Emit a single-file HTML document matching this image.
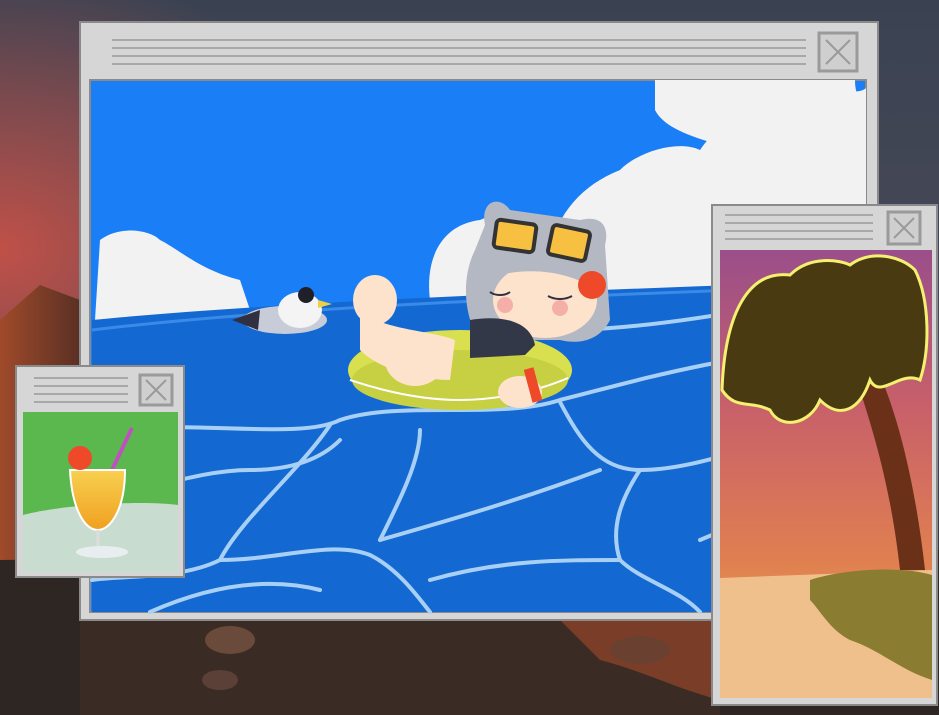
<!DOCTYPE html>
<html><head><style>html,body{margin:0;padding:0;width:939px;height:715px;overflow:hidden;background:#2c3038}</style></head><body>
<svg width="939" height="715" viewBox="0 0 939 715" xmlns="http://www.w3.org/2000/svg">
<defs>
<linearGradient id="sky" x1="0" y1="0" x2="0" y2="1"><stop offset="0" stop-color="#3a4252"/><stop offset="0.5" stop-color="#4a4a58"/><stop offset="1" stop-color="#2a2a30"/></linearGradient>
<radialGradient id="glow" cx="0" cy="0.35" r="0.4"><stop offset="0" stop-color="#c05048"/><stop offset="1" stop-color="#c05048" stop-opacity="0"/></radialGradient>
<linearGradient id="sunset" x1="0" y1="0" x2="0" y2="1"><stop offset="0" stop-color="#9a4e8a"/><stop offset="0.35" stop-color="#c8606a"/><stop offset="0.7" stop-color="#e08050"/><stop offset="1" stop-color="#f0b060"/></linearGradient>
<linearGradient id="drink" x1="0" y1="0" x2="0" y2="1"><stop offset="0" stop-color="#f8d050"/><stop offset="1" stop-color="#f0a020"/></linearGradient>
<linearGradient id="mtn" x1="0" y1="0" x2="1" y2="0"><stop offset="0" stop-color="#a04a2a"/><stop offset="1" stop-color="#5a3024"/></linearGradient>
</defs>
<rect width="939" height="715" fill="url(#sky)"/>
<rect width="939" height="715" fill="url(#glow)"/>
<path d="M0 320 L40 285 L80 300 L80 715 L0 715Z" fill="url(#mtn)"/>
<path d="M0 560 L939 550 L939 715 L0 715Z" fill="#2e2622"/>
<path d="M80 620 L720 620 L720 715 L80 715Z" fill="#3a2c24"/>
<path d="M560 620 L720 620 L720 700 C680 690 640 670 600 660Z" fill="#7a3e28"/>
<ellipse cx="230" cy="640" rx="25" ry="14" fill="#6a4a3a"/><ellipse cx="220" cy="680" rx="18" ry="10" fill="#5a4036"/><ellipse cx="640" cy="650" rx="30" ry="14" fill="#6a4030"/>
<rect x="80" y="22" width="798" height="598" fill="#d6d6d6" stroke="#8a8a8a" stroke-width="2"/>
<g stroke="#a8a8a8" stroke-width="2"><line x1="112" y1="40" x2="806" y2="40"/><line x1="112" y1="48" x2="806" y2="48"/><line x1="112" y1="56" x2="806" y2="56"/><line x1="112" y1="64" x2="806" y2="64"/></g>
<rect x="819" y="33" width="38" height="38" fill="#cfcfcf" stroke="#9a9a9a" stroke-width="3"/>
<path d="M826 40 L850 64 M850 40 L826 64" stroke="#9a9a9a" stroke-width="2"/>
<rect x="90" y="80" width="776" height="532" fill="#1a7ef6" stroke="#8a8a8a" stroke-width="2"/>
<path d="M540 300 C545 230 570 190 620 170 C640 150 680 140 700 150 C720 120 760 100 800 95 C830 90 860 95 866 88 L866 300Z" fill="#f2f2f2"/>
<path d="M655 80 L855 80 C855 95 860 100 866 105 L866 200 C820 190 780 160 740 150 C700 140 665 130 655 110Z" fill="#f2f2f2"/>
<path d="M430 300 C425 260 440 225 480 220 C500 210 530 220 545 240 L545 300Z" fill="#f2f2f2"/>
<path d="M95 320 L100 240 C120 225 150 230 160 240 C180 250 200 270 240 280 L250 310Z" fill="#f2f2f2"/>
<path d="M92 320 C300 300 600 290 866 280 L866 612 L92 612Z" fill="#1468d2"/>
<path d="M92 330 C300 305 600 295 866 285" stroke="#3a8ae8" stroke-width="3" fill="none"/>
<g stroke="#a8d0f4" stroke-width="4" fill="none" stroke-linecap="round">
<path d="M92 430 C200 420 300 440 340 420 C400 400 500 420 560 400 C640 380 700 360 866 340"/>
<path d="M330 425 C300 470 240 520 220 560 C180 580 120 575 92 580"/>
<path d="M220 560 C280 560 330 540 370 555 C400 570 420 600 430 612"/>
<path d="M420 430 C420 460 400 500 380 540"/>
<path d="M560 402 C580 440 600 470 640 470 C700 470 760 440 866 420"/>
<path d="M640 470 C620 500 610 530 620 560 C640 580 680 590 700 612"/>
<path d="M380 540 C450 520 520 500 600 470"/>
<path d="M430 580 C500 560 560 560 620 560"/>
<path d="M92 500 C150 490 200 470 250 470 C290 470 320 460 340 440"/>
<path d="M866 470 C800 490 750 520 700 540"/>
<path d="M150 612 C200 590 260 575 320 590"/>
<path d="M560 330 C620 330 700 320 800 300"/>
</g>
<ellipse cx="285" cy="320" rx="42" ry="14" fill="#c8ccd8"/>
<ellipse cx="300" cy="310" rx="22" ry="18" fill="#f4f4f4"/>
<path d="M232 320 L260 310 L258 330Z" fill="#303040"/>
<circle cx="306" cy="295" r="8" fill="#202028"/>
<path d="M318 300 L332 304 L318 308Z" fill="#f0d040"/>
<ellipse cx="460" cy="370" rx="112" ry="40" fill="#d8e050"/>
<ellipse cx="460" cy="380" rx="108" ry="30" fill="#c6d042"/>
<path d="M350 380 C380 390 420 400 460 400 C500 400 540 390 568 378" stroke="#fff" stroke-width="2" fill="none"/>
<path d="M485 225 C480 200 500 195 510 210 L580 220 C600 215 610 225 605 245 L610 320 C600 340 580 345 560 340 L480 340 C465 320 460 280 475 250Z" fill="#b4b8c2"/>
<ellipse cx="545" cy="300" rx="52" ry="38" fill="#fde2cc"/>
<path d="M480 260 C500 240 560 240 600 265 L595 290 C570 270 520 265 485 280Z" fill="#b4b8c2"/>
<circle cx="505" cy="305" r="8" fill="#f4b0a8"/><circle cx="560" cy="308" r="8" fill="#f4b0a8"/>
<path d="M490 292 C495 296 505 296 510 292 M548 296 C555 300 565 300 572 296" stroke="#303040" stroke-width="2" fill="none"/>
<rect x="495" y="222" width="40" height="28" rx="4" fill="#f8c040" stroke="#333" stroke-width="4" transform="rotate(8 515 236)"/>
<rect x="550" y="228" width="38" height="30" rx="4" fill="#f8c040" stroke="#333" stroke-width="4" transform="rotate(12 569 243)"/>
<circle cx="592" cy="285" r="14" fill="#ee4a2a"/>
<path d="M470 320 C500 315 530 320 535 345 L525 355 L470 358Z" fill="#333848"/>
<ellipse cx="375" cy="300" rx="22" ry="25" fill="#fde2cc"/>
<path d="M360 310 C380 330 430 330 455 340 L450 380 C420 380 380 370 360 350Z" fill="#fde2cc"/>
<ellipse cx="415" cy="360" rx="30" ry="26" fill="#fde2cc"/>
<ellipse cx="520" cy="392" rx="22" ry="16" fill="#fde2cc"/>
<rect x="528" y="368" width="10" height="34" fill="#ee4a2a" transform="rotate(-15 533 385)"/>
<rect x="16" y="366" width="168" height="211" fill="#d6d6d6" stroke="#8a8a8a" stroke-width="2"/>
<g stroke="#a8a8a8" stroke-width="2"><line x1="34" y1="378" x2="128" y2="378"/><line x1="34" y1="386" x2="128" y2="386"/><line x1="34" y1="394" x2="128" y2="394"/><line x1="34" y1="402" x2="128" y2="402"/></g>
<rect x="140" y="375" width="32" height="30" fill="#cfcfcf" stroke="#9a9a9a" stroke-width="3"/>
<path d="M146 380 L166 400 M166 380 L146 400" stroke="#9a9a9a" stroke-width="2"/>
<rect x="23" y="412" width="155" height="160" fill="#5ab84e"/>
<path d="M23 515 C60 505 140 500 178 505 L178 572 L23 572Z" fill="#c8ddd0"/>
<line x1="112" y1="470" x2="132" y2="428" stroke="#c050c0" stroke-width="4"/>
<path d="M70 470 L125 470 C125 510 110 530 98 530 C85 530 72 510 70 470Z" fill="url(#drink)" stroke="#fff" stroke-width="2"/>
<line x1="98" y1="530" x2="98" y2="548" stroke="#ddd" stroke-width="3"/>
<ellipse cx="102" cy="552" rx="26" ry="6" fill="#e8eef0"/>
<circle cx="80" cy="458" r="12" fill="#ee4a2a"/>
<rect x="712" y="205" width="225" height="500" fill="#d6d6d6" stroke="#8a8a8a" stroke-width="2"/>
<g stroke="#a8a8a8" stroke-width="2"><line x1="725" y1="215" x2="873" y2="215"/><line x1="725" y1="223" x2="873" y2="223"/><line x1="725" y1="231" x2="873" y2="231"/><line x1="725" y1="239" x2="873" y2="239"/></g>
<rect x="888" y="212" width="32" height="32" fill="#cfcfcf" stroke="#9a9a9a" stroke-width="3"/>
<path d="M894 218 L914 238 M914 218 L894 238" stroke="#9a9a9a" stroke-width="2"/>
<rect x="720" y="250" width="212" height="448" fill="url(#sunset)"/>
<path d="M720 578 L932 570 L932 698 L720 698Z" fill="#f0c08c"/>
<path d="M810 580 C840 570 900 565 932 575 L932 680 C900 670 880 650 850 640 C830 630 820 610 810 600Z" fill="#8a7c30"/>
<path d="M850 360 C870 420 890 480 900 570 L925 570 C915 480 895 400 870 355Z" fill="#6a3018"/>
<path d="M722 390 C725 310 750 270 790 275 C810 255 840 260 850 265 C870 250 900 255 915 270 C930 300 930 350 920 380 C900 370 880 400 870 380 C860 410 840 420 820 400 C810 425 780 430 770 410 C750 400 735 410 722 390Z" fill="#4a3a12" stroke="#f4f070" stroke-width="3"/>
</svg>
</body></html>
